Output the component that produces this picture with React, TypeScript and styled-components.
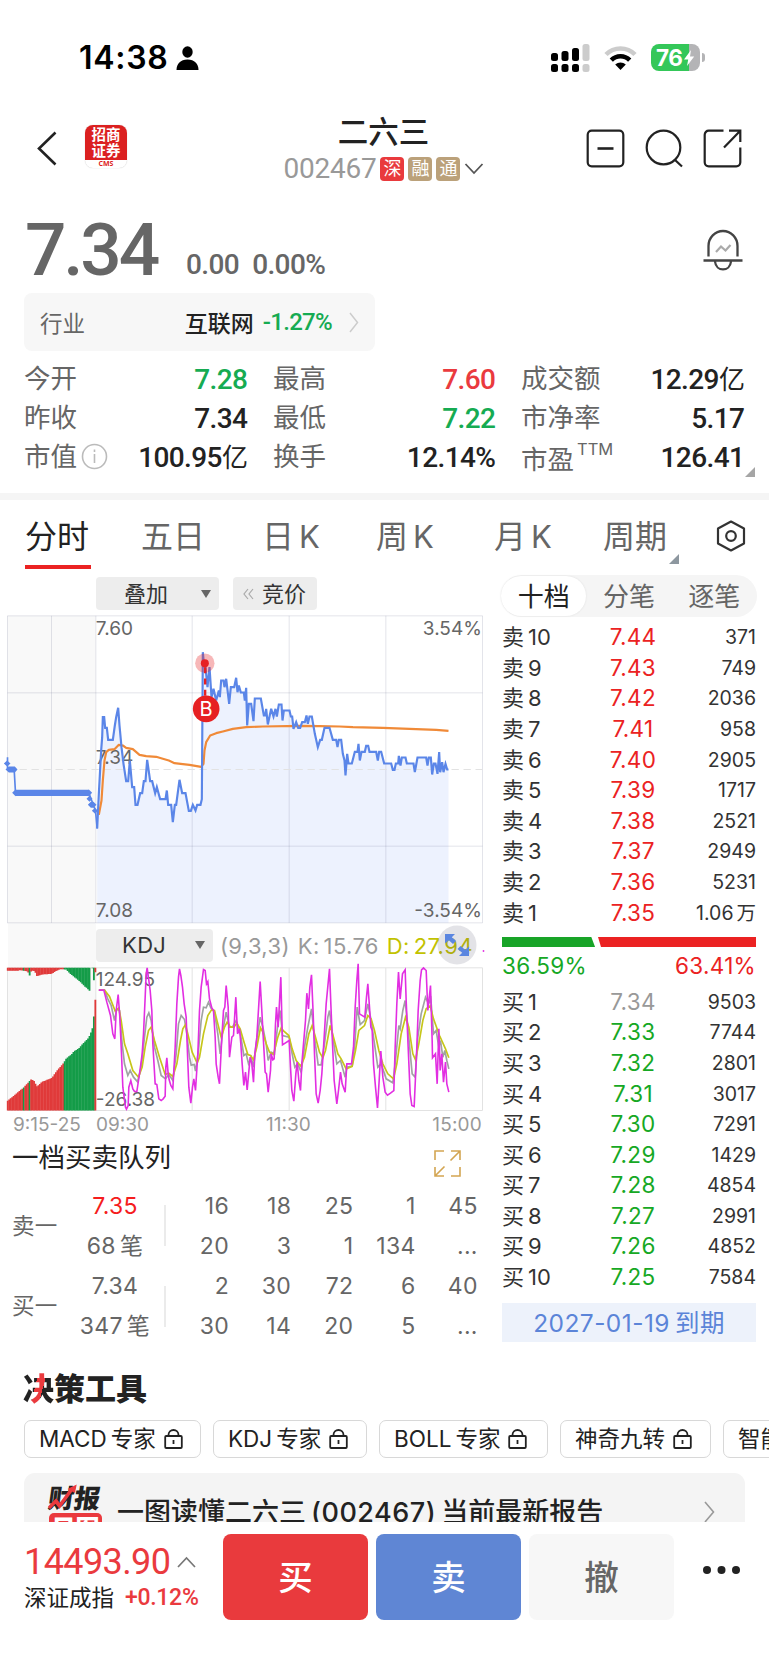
import React from "react";
import styled, { createGlobalStyle } from "styled-components";

const RED = "#eb2222";
const UP = "#ea3a3e";
const GREEN = "#16a824";
const SANS = `Inter, "Noto Sans CJK SC", sans-serif`;
const DIN = `Roboto, "Noto Sans CJK SC", sans-serif`;

const Global = createGlobalStyle`
  * { box-sizing: border-box; }
  body { margin: 0; background: #fff; }
`;

const Screen = styled.main`
  width: 769px;
  height: 1665px;
  overflow: hidden;
  display: flex;
  flex-direction: column;
  background: #fff;
  color: #222;
  font-family: ${SANS};
  white-space: nowrap;
`;

/* ---------- status bar ---------- */
const StatusBar = styled.div`
  height: 115px;
  flex: none;
  display: flex;
  align-items: center;
  padding: 0 69px 0 79px;
`;
const Clock = styled.span`
  font-size: 32px;
  font-weight: 600;
  color: #000;
  width: 97px;
  letter-spacing: 0.7px;
`;
const StatusIcons = styled.div`
  margin-left: auto;
  display: flex;
  align-items: center;
  gap: 14px;
`;
const Battery = styled.div`
  position: relative;
  width: 49px;
  height: 27px;
  border-radius: 8px;
  background: linear-gradient(90deg, #34c759 77%, #b4b4b6 77%);
  color: #fff;
  display: flex;
  align-items: center;
  padding-left: 5px;
  font-size: 22.5px;
  font-weight: 700;
  letter-spacing: -0.4px;
  line-height: 27px;
  &::after {
    content: "";
    position: absolute;
    right: -5px;
    top: 9px;
    width: 3px;
    height: 9px;
    border-radius: 0 3px 3px 0;
    background: #b4b4b6;
  }
`;

/* ---------- header ---------- */
const Header = styled.header`
  height: 84px;
  flex: none;
  display: grid;
  grid-template-columns: 249px 1fr 260px;
  padding: 0 27px 0 36px;
`;
const HeaderLeft = styled.div`
  display: flex;
  align-items: flex-start;
  gap: 27px;
  padding-top: 10px;
`;
const BrokerLogo = styled.div`
  width: 42px;
  height: 43px;
  border-radius: 8px;
  overflow: hidden;
  background: #fff;
  box-shadow: 0 0 1px #bbb;
  color: #fff;
  text-align: center;
  font: 700 14.5px/16px "Noto Sans CJK SC", sans-serif;
`;
const LogoTop = styled.div`
  height: 35px;
  padding-top: 1px;
  background: #db2020;
`;
const LogoFoot = styled.div`
  height: 8px;
  color: #d22;
  font: 700 7px/7px "Open Sans", sans-serif;
`;
const HeaderTitle = styled.div`
  display: flex;
  flex-direction: column;
  align-items: center;
  margin: 0 -20px;
`;
const StockName = styled.h1`
  margin: 0;
  font-size: 30.5px;
  font-weight: 500;
  line-height: 34px;
  height: 38px;
`;
const CodeLine = styled.div`
  display: flex;
  align-items: center;
  gap: 4px;
  height: 31px;
`;
const Code = styled.span`
  font: 400 28px/30px ${DIN};
  color: #999;
  letter-spacing: -0.25px;
  margin-left: 1px;
`;
const Badge = styled.span<{ $bg: string }>`
  width: 24px;
  height: 24px;
  border-radius: 4px;
  background: ${(p) => p.$bg};
  color: #fff;
  font-size: 18px;
  line-height: 23px;
  text-align: center;
`;
const HeaderActions = styled.div`
  display: flex;
  justify-content: flex-end;
  gap: 20px;
  padding-top: 14px;
`;

/* ---------- quote ---------- */
const PriceRow = styled.section`
  height: 94px;
  flex: none;
  display: flex;
  align-items: flex-end;
  padding: 0 26px 0 25px;
  color: #666;
`;
const Price = styled.div`
  font: 500 73px/73px ${DIN};
  letter-spacing: -3.2px;
  width: 161px;
  height: 80px;
  padding-top: 1px;
`;
const Change = styled.div`
  font: 500 28px/30px ${DIN};
  letter-spacing: -0.6px;
  height: 43px;
  display: flex;
  gap: 13px;
`;
const BellBox = styled.div`
  margin-left: auto;
  height: 64px;
`;
const Industry = styled.div`
  width: 351px;
  height: 58px;
  flex: none;
  margin-left: 24px;
  padding: 0 16px;
  border-radius: 8px;
  background: #f7f7f7;
  display: flex;
  align-items: center;
  font-size: 22.5px;
  color: #666;
`;
const IndustryName = styled.span`
  margin-left: auto;
  color: #222;
  font-weight: 500;
  font-size: 23px;
`;
const IndustryPct = styled.span`
  font: 500 24px/30px ${DIN};
  letter-spacing: -0.7px;
  color: #16ab52;
  margin: 0 17px 0 9px;
`;
const Stats = styled.section`
  height: 142px;
  flex: none;
  position: relative;
  display: grid;
  grid-template-columns: 223px 222px 223px;
  grid-auto-rows: 39.2px;
  column-gap: 26px;
  padding: 9px 25px 0 24px;
`;
const Stat = styled.div`
  display: flex;
  align-items: center;
  justify-content: space-between;
`;
const StatLabel = styled.span<{ $drop?: boolean }>`
  display: flex;
  align-items: center;
  gap: 4px;
  font-size: 26.5px;
  line-height: 36px;
  padding-bottom: ${(p) => (p.$drop ? 0 : 3)}px;
  padding-top: ${(p) => (p.$drop ? 3 : 0)}px;
  color: #666;
`;
const Sup = styled.sup`
  font-size: 16.5px;
  line-height: 17px;
  margin: 0 0 20px -1px;
  vertical-align: baseline;
`;
const StatValue = styled.span<{ $color?: string }>`
  font: 500 28px/38px ${DIN};
  letter-spacing: -0.6px;
  margin-right: -0.3px;
  color: ${(p) => p.$color || "#222"};
`;
const Yi = styled.span`
  font-size: 26px;
  font-weight: 400;
`;
const Corner = styled.i<{ $right: number; $bottom: number; $color: string }>`
  position: absolute;
  right: ${(p) => p.$right}px;
  bottom: ${(p) => p.$bottom}px;
  border-style: solid;
  border-width: 0 0 10px 10px;
  border-color: transparent transparent ${(p) => p.$color} transparent;
`;
const Divider = styled.div`
  height: 7px;
  flex: none;
  background: #f5f5f5;
`;

/* ---------- period tabs ---------- */
const Tabs = styled.nav`
  height: 75px;
  flex: none;
  display: flex;
  padding: 0 23px 0 25px;
  font-size: 32px;
`;
const Tab = styled.div<{ $w: number; $active?: boolean }>`
  width: ${(p) => p.$w}px;
  line-height: 74px;
  height: 75px;
  color: ${(p) => (p.$active ? "#222" : "#666")};
  display: flex;
  gap: 5px;
  position: relative;
  &::after {
    content: "";
    display: ${(p) => (p.$active ? "block" : "none")};
    position: absolute;
    left: 0;
    top: 65px;
    width: 66px;
    height: 4px;
    background: ${RED};
  }
`;
const Latin = styled.span`
  font-size: 31px;
`;
const GearBox = styled.div`
  margin-left: auto;
  padding-top: 20px;
`;

/* ---------- body ---------- */
const Body = styled.div`
  height: 779px;
  flex: none;
  display: grid;
  grid-template-columns: 483px 256px;
  column-gap: 18px;
`;
const Left = styled.div`
  display: flex;
  flex-direction: column;
`;
const Toolbar = styled.div`
  height: 39.5px;
  flex: none;
  padding: 2px 0 0 96px;
  display: flex;
  gap: 14px;
`;
const Tool = styled.div<{ $w: number; $px: string }>`
  width: ${(p) => p.$w}px;
  height: 33px;
  padding: ${(p) => p.$px};
  border-radius: 4px;
  background: #ededed;
  display: flex;
  align-items: center;
  justify-content: space-between;
  font-size: 22px;
  line-height: 33px;
  color: #333;
`;
const Caret = styled.i`
  border-style: solid;
  border-width: 8px 5.5px 0;
  border-color: #666 transparent transparent;
`;
const ChartPad = styled.div`
  padding-left: 7.2px;
`;
const Chart = styled.svg`
  display: block;
  flex: none;
  overflow: visible;
`;
const IndicatorRow = styled.div`
  height: 43.5px;
  flex: none;
  position: relative;
  margin-left: 8px;
  padding: 5px 0 0 88px;
  display: flex;
  font-size: 22px;
  line-height: 34px;
  letter-spacing: 0.35px;
  background: linear-gradient(90deg, #f9f9f9 88px, transparent 88px);
`;
const Reading = styled.span<{ $color: string; $ml: number }>`
  color: ${(p) => p.$color};
  margin-left: ${(p) => p.$ml}px;
  display: flex;
  gap: 4px;
`;
const Expand = styled.svg`
  position: absolute;
  left: 429px;
  top: 1px;
`;
const TimeAxis = styled.div`
  height: 29px;
  flex: none;
  display: grid;
  grid-template-columns: 83px 158px 122px 106px;
  padding-left: 13px;
  font-size: 19px;
  line-height: 28px;
  color: #999;
`;
const Midday = styled.span`
  padding-left: 12px;
`;
const End = styled.span`
  text-align: right;
  letter-spacing: 0.2px;
`;
const QueueHead = styled.div`
  height: 45.5px;
  flex: none;
  padding: 0 22px 0 12px;
  display: flex;
  justify-content: space-between;
  align-items: flex-start;
  font-size: 26.5px;
  line-height: 34px;
`;
const ExpandGold = styled.svg`
  margin-top: 10px;
`;
const Queue = styled.div`
  height: 80.7px;
  flex: none;
  display: grid;
  grid-template-columns: 63px 80px 11px 63px 62.2px 62.2px 62.2px 62.2px;
  grid-template-rows: 40.3px 40.3px;
  padding-left: 12px;
  color: #666;
  font-size: 23px;
  line-height: 40px;
  letter-spacing: 0.3px;
`;
const Side = styled.div`
  grid-row: 1 / 3;
  align-self: center;
  font-size: 22.5px;
`;
const QueuePrice = styled.div<{ $color?: string }>`
  text-align: center;
  color: ${(p) => p.$color || "#666"};
`;
const Count = styled.div`
  display: flex;
  justify-content: center;
  gap: 4px;
`;
const Bar = styled.div`
  grid-row: 1 / 3;
  grid-column: 3;
  justify-self: end;
  align-self: center;
  width: 2px;
  height: 41px;
  background: #ebebeb;
`;
const Cell = styled.div`
  text-align: right;
`;

/* ---------- order book ---------- */
const Right = styled.div`
  display: flex;
  flex-direction: column;
`;
const BookTabs = styled.div`
  height: 42px;
  flex: none;
  border-radius: 21px;
  background: #f5f5f5;
  display: flex;
  font-size: 26px;
  line-height: 42px;
  text-align: center;
`;
const BookTab = styled.div<{ $active?: boolean }>`
  flex: 1;
  height: 40px;
  margin-top: 1px;
  border-radius: 20px;
  background: ${(p) => (p.$active ? "#fff" : "transparent")};
  color: ${(p) => (p.$active ? "#222" : "#666")};
  box-shadow: ${(p) => (p.$active ? "0 0 2px #ddd" : "none")};
`;
const Book = styled.div<{ $top: number }>`
  margin-top: ${(p) => p.$top}px;
  display: flex;
  flex-direction: column;
`;
const Level = styled.div`
  height: 30.6px;
  display: grid;
  grid-template-columns: 86px 90px 78px;
  align-items: center;
  padding-left: 1px;
  font-size: 22px;
  line-height: 30px;
  color: #333;
`;
const LevelName = styled.span`
  display: flex;
  gap: 4px;
`;
const LevelPrice = styled.span<{ $color: string }>`
  color: ${(p) => p.$color};
  font-size: 22.5px;
  text-align: center;
  letter-spacing: 0.3px;
`;
const Volume = styled.span`
  font-size: 19.5px;
  display: flex;
  justify-content: flex-end;
  gap: 3px;
`;
const Ratio = styled.div`
  height: 10px;
  margin: 9px 1px 0;
  flex: none;
  display: flex;
`;
const RatioBuy = styled.div`
  width: 94px;
  background: #18a428;
  clip-path: polygon(0 0, 95% 0, 99% 100%, 0 100%);
`;
const RatioSell = styled.div`
  flex: 1;
  background: ${RED};
  clip-path: polygon(2px 0, 100% 0, 100% 100%, 5px 100%);
`;
const RatioText = styled.div`
  display: flex;
  justify-content: space-between;
  padding: 0 1px 0 1px;
  line-height: 37px;
  height: 36px;
`;
const Expiry = styled.div`
  height: 39px;
  margin: 11px 1px 0;
  background: #edf2fb;
  color: #5b84d8;
  font-size: 24.5px;
  letter-spacing: 0.45px;
  line-height: 40px;
  display: flex;
  gap: 5px;
  justify-content: center;
`;

/* ---------- tools ---------- */
const ToolsTitle = styled.h2`
  flex: none;
  margin: 0 0 0 23px;
  font: 900 31px/44px "Noto Sans CJK SC", sans-serif;
  padding-top: 11px;
  height: 65.5px;
`;
const TitleAccent = styled.span`
  background: linear-gradient(105deg, #222 42%, ${UP} 42%, ${UP} 61%, #222 61%);
  background-clip: text;
  color: transparent;
`;
const Chips = styled.div`
  display: flex;
  flex: none;
  gap: 12px;
  padding-left: 24px;
`;
const Chip = styled.div<{ $w: number }>`
  width: ${(p) => p.$w}px;
  height: 38px;
  flex: none;
  border: 1.5px solid #d8d8d8;
  border-radius: 7px;
  padding-left: 14px;
  display: flex;
  align-items: center;
  gap: 4px;
  font-size: 22.5px;
  line-height: 34px;
`;
const Lock = styled.svg`
  margin-left: 4px;
`;
const ReportClip = styled.div`
  height: 64.5px;
  flex: none;
  overflow: hidden;
  padding: 15.5px 24px 0;
`;
const Report = styled.div`
  height: 90px;
  border-radius: 11px;
  background: #f4f4f4;
  padding: 0 29px 0 25px;
  display: flex;
`;
const ReportLogo = styled.div`
  width: 68px;
  font: 900 26px/28px "Noto Sans CJK SC", sans-serif;
`;
const LogoWord = styled.div`
  width: 53px;
  transform: skewX(-8deg);
  padding-top: 10px;
  height: 40px;
  position: relative;
`;
const LogoArrow = styled.svg`
  position: absolute;
  left: 1px;
  top: 11px;
`;
const LogoBox = styled.div`
  width: 53px;
  height: 36px;
  border-radius: 5px;
  background: ${UP};
  color: #fff;
  font-size: 24px;
  line-height: 27px;
  text-align: center;
`;
const ReportText = styled.div`
  display: flex;
  gap: 5px;
  font-size: 27px;
  font-weight: 500;
  line-height: 38px;
  padding-top: 21px;
`;
const ReportCode = styled.span`
  letter-spacing: 0.5px;
`;
const ReportArrow = styled.svg`
  margin: 28px 1px 0 auto;
`;

/* ---------- bottom ---------- */
const Bottom = styled.footer`
  flex: none;
  height: 144px;
  background: #fff;
  padding: 12px 0 0 24px;
  display: flex;
  gap: 8px;
`;
const Index = styled.div`
  width: 191px;
`;
const IndexValue = styled.div`
  display: flex;
  align-items: center;
  gap: 7px;
  color: ${UP};
  font: 400 36px/40px ${DIN};
  letter-spacing: -0.6px;
  padding-top: 8px;
`;
const IndexLine = styled.div`
  display: flex;
  gap: 11px;
  font-size: 22.5px;
  line-height: 32px;
`;
const IndexPct = styled.span`
  font: 500 23px/32px ${DIN};
  letter-spacing: -0.3px;
  color: ${UP};
`;
const Action = styled.button<{ $bg: string; $color: string }>`
  width: 145px;
  height: 86px;
  border: 0;
  padding: 0;
  border-radius: 8px;
  background: ${(p) => p.$bg};
  color: ${(p) => p.$color};
  font: 500 34.5px/88px ${SANS};
`;
const More = styled.svg`
  margin: 31px 0 0 20px;
`;

/* ---------- data ---------- */
const priceLine =
  "293,684 298,580 305,450 308,410 310,350 314,350 317,382 322,382 326,418 340,418 346,375 350,350 356,322 360,375 366,440 372,490 380,542 386,542 391,480 398,560 404,560 408,613 414,613 422,578 428,578 433,542 438,542 443,478 452,542 458,542 467,578 472,560 482,596 498,596 502,570 506,613 515,613 520,665 526,613 530,613 540,538 548,578 558,578 568,631 574,631 580,613 588,630 593,613 603,613 607,596 610,155 614,200 617,190 624,260 630,200 636,290 642,265 650,300 658,270 661,290 665,240 672,240 675,260 680,235 689,310 694,260 704,260 710,232 714,275 718,255 724,276 733,276 736,300 740,262 743,375 748,310 755,310 762,362 766,294 784,294 793,345 797,345 800,325 805,372 815,325 822,348 828,325 832,348 838,312 846,312 849,360 853,330 870,330 874,348 878,348 882,385 890,365 896,382 902,382 908,365 916,365 921,345 925,370 930,348 937,348 946,400 955,440 962,418 967,418 975,382 990,382 1000,418 1010,418 1014,440 1018,418 1025,418 1030,460 1035,480 1038,525 1043,460 1047,489 1057,489 1066,454 1074,454 1077,430 1081,480 1086,454 1096,454 1100,436 1106,436 1110,454 1130,454 1135,480 1139,454 1145,454 1154,489 1175,489 1180,508 1185,508 1189,489 1196,489 1198,466 1203,495 1207,471 1218,471 1222,489 1242,489 1246,515 1254,471 1280,471 1284,495 1288,471 1294,471 1298,522 1303,489 1308,489 1314,520 1319,455 1322,515 1328,485 1332,515 1338,490 1343,507 1347,507";
const averageLine =
  "298,643 306,600 310,540 315,480 320,455 328,448 345,446 358,433 370,435 380,442 400,446 420,463 440,467 470,469 490,475 508,480 525,488 550,491 570,493 605,499 612,490 615,450 620,425 632,405 650,398 670,393 700,385 740,380 790,378 900,376 960,377 1020,378 1060,380 1150,382 1250,386 1310,388 1347,391";
const jLine =
  "298,209 313,209 322,245 333,285 340,340 346,355 350,270 356,222 361,290 366,400 370,500 378,560 381,566 386,555 388,500 394,480 400,505 405,513 412,513 420,460 428,400 432,340 437,230 440,160 443,142 448,180 452,210 457,270 460,370 467,490 472,492 478,535 485,540 491,535 497,527 499,440 502,412 506,460 509,478 514,495 520,505 527,380 532,250 537,170 540,145 544,165 549,200 554,250 560,290 564,400 568,500 574,548 579,500 583,475 588,510 595,400 600,270 605,200 612,147 617,150 621,190 625,183 630,235 637,262 642,270 647,350 650,430 656,470 660,490 667,350 672,270 676,260 680,195 686,260 690,410 697,350 702,345 709,230 714,340 720,325 724,370 728,430 733,495 738,455 743,508 752,410 757,430 762,485 766,400 772,350 778,250 782,183 788,290 794,400 797,455 801,460 806,515 813,450 815,400 820,418 824,415 828,310 831,260 836,320 844,170 849,373 869,360 873,440 877,510 883,542 889,460 893,425 898,480 903,510 907,430 912,370 918,300 922,218 927,265 931,200 936,163 941,280 945,400 950,520 956,548 962,510 967,460 974,350 980,250 990,145 994,250 999,370 1004,480 1012,550 1017,510 1023,455 1028,490 1037,515 1042,430 1056,430 1062,380 1067,260 1072,180 1076,130 1080,280 1096,290 1101,230 1105,190 1110,260 1114,320 1118,330 1122,430 1128,500 1134,562 1139,480 1144,392 1150,470 1157,515 1164,524 1173,518 1183,510 1187,380 1192,250 1197,155 1202,235 1209,160 1217,148 1220,240 1226,380 1232,520 1237,555 1244,558 1248,470 1252,380 1256,270 1262,180 1266,148 1272,142 1280,150 1285,270 1293,195 1298,360 1299,412 1308,400 1313,490 1318,325 1322,450 1327,400 1332,485 1338,425 1342,490 1348,515";
const kLine =
  "298,209 315,209 325,235 335,255 345,300 352,265 360,270 368,370 375,430 385,465 392,450 402,470 414,484 425,440 435,350 442,290 448,277 455,300 465,380 475,420 485,465 498,475 508,462 520,480 530,400 537,310 545,285 555,297 562,340 570,410 575,434 584,432 588,452 597,390 605,300 612,260 620,262 627,245 634,262 645,275 655,340 662,400 670,330 680,275 690,320 700,318 710,300 722,335 733,405 740,400 747,430 755,410 762,440 770,370 782,290 790,320 800,370 806,420 815,395 825,400 835,310 842,270 849,345 869,350 878,400 886,440 895,430 905,455 915,380 925,320 936,265 945,350 956,433 965,433 975,370 985,290 990,270 1000,350 1012,430 1023,420 1037,470 1042,440 1058,437 1066,370 1073,260 1082,312 1095,300 1105,250 1115,300 1125,370 1135,440 1145,430 1160,475 1180,487 1188,420 1198,315 1202,325 1210,270 1217,240 1225,320 1238,460 1247,470 1255,350 1265,280 1278,230 1287,250 1294,235 1302,340 1310,330 1318,380 1323,360 1330,410 1336,390 1342,420 1348,445";
const dLine =
  "298,209 315,209 330,228 347,272 358,262 365,300 375,370 385,400 400,450 417,470 428,440 437,380 447,330 455,320 465,360 480,410 497,462 508,458 520,468 532,430 543,360 550,325 558,312 565,340 578,395 593,428 600,410 612,340 625,285 636,268 645,270 655,310 665,350 675,320 683,305 693,320 703,320 712,308 722,325 735,370 745,402 753,405 762,418 772,380 783,322 790,335 800,370 810,395 822,402 835,350 845,322 853,332 868,345 878,385 890,420 904,437 915,410 928,340 938,315 948,350 960,395 970,412 978,390 992,315 1002,350 1015,400 1025,415 1040,445 1058,438 1068,390 1078,330 1095,315 1105,285 1115,295 1125,330 1138,390 1150,430 1165,460 1182,475 1192,430 1205,340 1218,290 1228,320 1240,400 1248,418 1258,370 1270,300 1280,265 1292,256 1302,295 1320,345 1338,385 1348,412";

type Pt = [number, number];
const lowerProfile: Pt[] = [[22, 541], [35, 530], [48, 519], [70, 501], [84, 486], [92, 477], [100, 480], [110, 498], [125, 484], [155, 472], [170, 450], [188, 430], [197, 415], [215, 400], [220, 393], [235, 384], [250, 367], [265, 352], [272, 335], [278, 318], [282, 268], [286, 225]];
const upperProfile: Pt[] = [[22, 9], [50, 9], [60, 7], [82, 11], [88, 24], [93, 8], [103, 10], [110, 25], [125, 20], [155, 18], [165, 10], [180, 4], [197, 5], [210, 18], [225, 30], [240, 42], [255, 58], [262, 62], [267, 74], [271, 0], [276, 0], [278, 44], [283, 30], [286, 2]];
const at = (p: Pt[], x: number) => {
  const i = p.findIndex((q) => q[0] >= x);
  if (i <= 0) return p[i === 0 ? 0 : p.length - 1][1];
  const [a, b] = [p[i - 1], p[i]];
  return a[1] + ((b[1] - a[1]) * (x - a[0])) / (b[0] - a[0]);
};
const auctionBars = Array.from({ length: 61 }, (_, i) => {
  const x = 22 + i * 4.38;
  const green = (x > 189 && x < 284 && !(x > 272 && x < 275)) || (x > 68 && x < 72) || (x > 84 && x < 92);
  return { x, green, low: at(lowerProfile, x), up: at(upperProfile, x) };
});

const sells = [["10", "7.44", "371"], ["9", "7.43", "749"], ["8", "7.42", "2036"], ["7", "7.41", "958"], ["6", "7.40", "2905"], ["5", "7.39", "1717"], ["4", "7.38", "2521"], ["3", "7.37", "2949"], ["2", "7.36", "5231"], ["1", "7.35", "1.06"]];
const buys = [["1", "7.34", "9503"], ["2", "7.33", "7744"], ["3", "7.32", "2801"], ["4", "7.31", "3017"], ["5", "7.30", "7291"], ["6", "7.29", "1429"], ["7", "7.28", "4854"], ["8", "7.27", "2991"], ["9", "7.26", "4852"], ["10", "7.25", "7584"]];
const chips: [number, string, string][] = [[177, "MACD", "专家"], [154, "KDJ", "专家"], [169, "BOLL", "专家"], [151, "", "神奇九转"], [170, "", "智能盯盘"]];

const grid = { stroke: "#e2e2e2", strokeWidth: 3, fill: "none" };
const chartText = { fontFamily: "Inter", fontSize: 57, fill: "#666" };

const PriceChart = () => (
  <Chart width={476} height={309} viewBox="22.5 43.5 1428 927">
    <rect x="24" y="46" width="264" height="924" fill="#f9f9f9" />
    <polygon points={`293,967 ${priceLine} 1347,967`} fill="#edf2fe" />
    <path d="M24 46H1449V967H24ZM156 46V967M289 46V967M578 46V967M869 46V967M1159 46V967M24 277H1449M24 737H1449" fill="none" strokeWidth="3" stroke="#5a6080" strokeOpacity="0.17" />
    <path d="M24 507H1449" stroke="#e2e2e2" strokeWidth="3" strokeDasharray="22 14" />
    <text x="289" y="102" {...chartText}>7.60</text>
    <text x="289" y="489" {...chartText}>7.34</text>
    <text x="289" y="948" {...chartText}>7.08</text>
    <text x="1447" y="102" textAnchor="end" {...chartText}>3.54%</text>
    <text x="1447" y="948" textAnchor="end" {...chartText}>-3.54%</text>
    <path d="M24 470V507M44 507L48 577M268 577L288 631L293 684" stroke="#5b86e8" strokeWidth="5" fill="none" />
    <path d="M48 577H268" stroke="#5b86e8" strokeWidth="19" />
    <path d="M23 480l10 9l-10 9l-10-9zM18 507l10-9h18l8 9l-8 9h-18zM38 577l10-10l10 10l-10 10zM258 577l10-10l10 10l-10 10zM261 595l9-9l9 9l-9 9zM265 613l9-9h8l9 9l-9 9h-8zM277 631l10-9l8 9l-8 9z" fill="#5b86e8" />
    <polyline points={averageLine} fill="none" stroke="#f08a38" strokeWidth="6.5" strokeLinejoin="round" />
    <polyline points={priceLine} fill="none" stroke="#5b86e8" strokeWidth="6.5" />
    <circle cx="616" cy="188" r="29" fill="#e62022" fillOpacity="0.32" />
    <circle cx="616" cy="188" r="12" fill="#e62022" />
    <path d="M617 196V290" stroke="#e62022" strokeWidth="7" strokeDasharray="18 16" strokeDashoffset="-4" />
    <circle cx="620" cy="325" r="40" fill="#e62022" />
    <text x="620" y="346" textAnchor="middle" fontFamily="Inter" fontSize="60" fill="#fff">B</text>
  </Chart>
);

const KdjChart = () => (
  <Chart width={476} height={144} viewBox="22.5 139.5 1428 432">
    <rect x="24" y="139" width="264" height="431" fill="#f9f9f9" />
    <path d="M24 142H1449V570H24ZM156 142V570M289 142V570M578 142V570M869 142V570M1159 142V570" {...grid} />
    {auctionBars.map((b) => (
      <path key={b.x} d={`M${b.x} 142h5.500v${b.up}h-5.500zM${b.x} ${b.low}h5.500V570h-5.500z`} fill={b.green ? "#149c48" : "#e03a3a"} />
    ))}
    <text x="289" y="196" {...chartText}>124.95</text>
    <text x="289" y="557" {...chartText}>-26.38</text>
    <polyline points={kLine} fill="none" stroke="#a0a3a3" strokeWidth="5" />
    <polyline points={dLine} fill="none" stroke="#c6c61a" strokeWidth="5" />
    <polyline points={jLine} fill="none" stroke="#e22ee2" strokeWidth="4.8" />
  </Chart>
);

const LevelRow = ({ side, row, color, unit }: { side: string; row: string[]; color: string; unit?: string }) => (
  <Level>
    <LevelName><span>{side}</span><span>{row[0]}</span></LevelName>
    <LevelPrice $color={color}>{row[1]}</LevelPrice>
    <Volume><span>{row[2]}</span>{unit && <span>{unit}</span>}</Volume>
  </Level>
);

const QueueBlock = ({ name, price, color, count, top, bottom }: { name: string; price: string; color?: string; count: string; top: string[]; bottom: string[] }) => (
  <Queue>
    <Side>{name}</Side>
    <QueuePrice $color={color}>{price}</QueuePrice>
    <Bar />
    {top.map((v, i) => <Cell key={i}>{v}</Cell>)}
    <Count><span>{count}</span><span>笔</span></Count>
    {bottom.map((v, i) => <Cell key={i}>{v}</Cell>)}
  </Queue>
);

export default function App() {
  return (
    <Screen>
      <Global />
      <StatusBar>
        <Clock>14:38</Clock>
        <svg width="23" height="24" viewBox="0 0 23 24"><ellipse cx="11.5" cy="6" rx="5.2" ry="5.8" /><path d="M.5 24c0-6 4-10.500 11-10.500s11 4.500 11 10.500z" /></svg>
        <StatusIcons>
          <svg width="39" height="28" viewBox="0 0 39 28">
            <g fill="#000"><rect x="0" y="9" width="7" height="8" rx="2.500" /><rect x="10.500" y="7" width="7" height="10" rx="2.500" /><rect x="21" y="4" width="7" height="13" rx="2.500" /><rect x="0" y="20" width="7" height="8" rx="2.500" /><rect x="10.500" y="20" width="7" height="8" rx="2.500" /><rect x="21" y="20" width="7" height="8" rx="2.500" /></g>
            <g fill="#ccc"><rect x="31.500" y="0" width="7" height="17" rx="2.500" /><rect x="31.500" y="20" width="7" height="8" rx="2.500" /></g>
          </svg>
          <svg width="33" height="24" viewBox="0 0 33 24" fill="none" strokeWidth="4.600">
            <path d="M2 8.500C10 .4 23 .4 31 8.500" stroke="#ccc" />
            <path d="M7.300 14.200C12.500 9 20.500 9 25.700 14.200" stroke="#000" />
            <path d="M11.200 18.600C14.200 15.800 18.800 15.800 21.800 18.600L16.500 24Z" fill="#000" />
          </svg>
          <Battery>76<svg width="12" height="18" viewBox="0 0 12 18"><path d="M8 1L1 10.500h4.200L4 17l7.200-9.500H7z" fill="#fff" /></svg></Battery>
        </StatusIcons>
      </StatusBar>

      <Header>
        <HeaderLeft>
          <svg width="22" height="46" viewBox="0 0 22 46"><path d="M19.500 7.500L3 23.500l16.500 16" fill="none" stroke="#222" strokeWidth="2.600" /></svg>
          <BrokerLogo><LogoTop>招商<br />证券</LogoTop><LogoFoot>CMS</LogoFoot></BrokerLogo>
        </HeaderLeft>
        <HeaderTitle>
          <StockName>二六三</StockName>
          <CodeLine>
            <Code>002467</Code>
            <Badge $bg="#e93a3d">深</Badge><Badge $bg="#bba17a">融</Badge><Badge $bg="#bba17a">通</Badge>
            <svg width="20" height="12" viewBox="0 0 20 12"><path d="M1.500 1l8.500 9 8.500-9" fill="none" stroke="#555" strokeWidth="1.800" /></svg>
          </CodeLine>
        </HeaderTitle>
        <HeaderActions>
          <svg width="39" height="39" viewBox="0 0 39 39" fill="none" stroke="#222" strokeWidth="2.200"><rect x="1.700" y="1.700" width="35.600" height="35.600" rx="4" /><path d="M11.500 19.500h16" strokeWidth="2.600" /></svg>
          <svg width="38" height="39" viewBox="0 0 38 39" fill="none" stroke="#222" strokeWidth="2.200"><circle cx="18.500" cy="18.500" r="16.800" /><path d="M29.500 30.500l7.500 7" /></svg>
          <svg width="39" height="39" viewBox="0 0 39 39" fill="none" stroke="#222" strokeWidth="2.200"><path d="M20.500 1.700H5.700a4 4 0 0 0-4 4v27.600a4 4 0 0 0 4 4h27.600a4 4 0 0 0 4-4V18.500M21 18.500L37 2M26 1.700h11.300V13" /></svg>
        </HeaderActions>
      </Header>

      <PriceRow>
        <Price>7.34</Price>
        <Change><span>0.00</span><span>0.00%</span></Change>
        <BellBox>
          <svg width="40" height="42" viewBox="0 0 40 42" fill="none" stroke="#444" strokeWidth="2.300"><path d="M5.500 27.500V17a14.500 15 0 0 1 29 0V27.500M0.500 31.500h39M12 32.500c1 10.500 15 10.500 16 0" /><path d="M13 23l5-5.500 4.500 4 5-5.500" stroke="#aaa" strokeWidth="2.200" /></svg>
        </BellBox>
      </PriceRow>

      <Industry>
        行业<IndustryName>互联网</IndustryName><IndustryPct>-1.27%</IndustryPct>
        <svg width="10" height="21" viewBox="0 0 10 21"><path d="M1 1l7.500 9.500L1 20" fill="none" stroke="#ccc" strokeWidth="1.500" /></svg>
      </Industry>

      <Stats>
        <Stat><StatLabel>今开</StatLabel><StatValue $color="#16ab52">7.28</StatValue></Stat>
        <Stat><StatLabel>最高</StatLabel><StatValue $color={UP}>7.60</StatValue></Stat>
        <Stat><StatLabel>成交额</StatLabel><StatValue>12.29<Yi>亿</Yi></StatValue></Stat>
        <Stat><StatLabel>昨收</StatLabel><StatValue>7.34</StatValue></Stat>
        <Stat><StatLabel>最低</StatLabel><StatValue $color="#16ab52">7.22</StatValue></Stat>
        <Stat><StatLabel>市净率</StatLabel><StatValue>5.17</StatValue></Stat>
        <Stat>
          <StatLabel>市值<svg width="27" height="27" viewBox="0 0 27 27" fill="none" stroke="#bbb" strokeWidth="1.600"><circle cx="13.500" cy="13.500" r="12" /><path d="M13.500 11v9M13.500 6.500v2.500" /></svg></StatLabel>
          <StatValue>100.95<Yi>亿</Yi></StatValue>
        </Stat>
        <Stat><StatLabel>换手</StatLabel><StatValue>12.14%</StatValue></Stat>
        <Stat><StatLabel $drop>市盈<Sup>TTM</Sup></StatLabel><StatValue>126.41</StatValue></Stat>
        <Corner $right={14} $bottom={16} $color="#a5a5a5" />
      </Stats>
      <Divider />

      <Tabs>
        <Tab $w={116} $active>分时</Tab>
        <Tab $w={121}>五日</Tab>
        <Tab $w={114}><span>日</span><Latin>K</Latin></Tab>
        <Tab $w={118}><span>周</span><Latin>K</Latin></Tab>
        <Tab $w={109}><span>月</span><Latin>K</Latin></Tab>
        <Tab $w={77}>周期<Corner $right={1} $bottom={11} $color="#8d979f" /></Tab>
        <GearBox>
          <svg width="30" height="32" viewBox="0 0 30 32" fill="none" stroke="#333" strokeWidth="2.200"><path d="M15 1.500L28 8.500v15L15 30.500 2 23.500v-15z" strokeLinejoin="round" /><circle cx="15" cy="16" r="4.800" /></svg>
        </GearBox>
      </Tabs>

      <Body>
        <Left>
          <Toolbar>
            <Tool $w={123} $px="1px 8px 0 28px">叠加<Caret /></Tool>
            <Tool $w={84} $px="1px 11px 0 10px">
              <svg width="11" height="12" viewBox="0 0 11 12"><path d="M5 1L1 6l4 5M10 1L6 6l4 5" fill="none" stroke="#aaa" strokeWidth="1.200" /></svg>竞价
            </Tool>
          </Toolbar>
          <ChartPad><PriceChart /></ChartPad>
          <IndicatorRow>
            <Tool $w={117} $px="0 8px 0 26px">KDJ<Caret /></Tool>
            <Reading $color="#999" $ml={7}>(9,3,3)</Reading>
            <Reading $color="#999" $ml={8}><span>K:</span><span>15.76</span></Reading>
            <Reading $color="#c2c200" $ml={8}><span>D:</span><span>27.94</span></Reading>
            <Expand width="54" height="40" viewBox="0 0 54 40">
              <circle cx="20" cy="20" r="19.500" fill="#464660" fillOpacity="0.15" />
              <path d="M8 9h10l-3.200 3.200L19 16l-3 3-4.200-3.800L8 18.500zM32 31H22l3.200-3.200L20.500 24l3-3 4.700 3.800L32 21.500z" fill="#5b86e0" />
              <circle cx="46.500" cy="26" r="0.900" fill="#e22ee2" />
            </Expand>
          </IndicatorRow>
          <ChartPad><KdjChart /></ChartPad>
          <TimeAxis><span>9:15-25</span><span>09:30</span><Midday>11:30</Midday><End>15:00</End></TimeAxis>
          <QueueHead>
            一档买卖队列
            <ExpandGold width="27" height="27" viewBox="0 0 27 27" fill="none" stroke="#d3a552" strokeWidth="1.600"><path d="M1 10V1h9M17 1h9v9M26 17v9h-9M10 26H1v-9M26 1l-9.500 9.500M1 26l9.500-9.500" /></ExpandGold>
          </QueueHead>
          <QueueBlock name="卖一" price="7.35" color="#f51d1d" count="68" top={["16", "18", "25", "1", "45"]} bottom={["20", "3", "1", "134", "..."]} />
          <QueueBlock name="买一" price="7.34" count="347" top={["2", "30", "72", "6", "40"]} bottom={["30", "14", "20", "5", "..."]} />
        </Left>

        <Right>
          <BookTabs><BookTab $active>十档</BookTab><BookTab>分笔</BookTab><BookTab>逐笔</BookTab></BookTabs>
          <Book $top={5}>
            {sells.map((r) => <LevelRow key={r[0]} side="卖" row={r} color={RED} unit={r[0] === "1" ? "万" : undefined} />)}
          </Book>
          <Ratio><RatioBuy /><RatioSell /></Ratio>
          <RatioText><LevelPrice $color={GREEN}>36.59%</LevelPrice><LevelPrice $color={RED}>63.41%</LevelPrice></RatioText>
          <Book $top={3.5}>
            {buys.map((r) => <LevelRow key={r[0]} side="买" row={r} color={r[0] === "1" ? "#999" : GREEN} />)}
          </Book>
          <Expiry><span>2027-01-19</span><span>到期</span></Expiry>
        </Right>
      </Body>

      <ToolsTitle><TitleAccent>决</TitleAccent>策工具</ToolsTitle>
      <Chips>
        {chips.map(([w, en, zh]) => (
          <Chip key={en + zh} $w={w}>
            {en && <span>{en}</span>}<span>{zh}</span>
            <Lock width="19" height="20" viewBox="0 0 19 20" fill="none" stroke="#222" strokeWidth="1.800"><rect x="1.200" y="7" width="16.600" height="12" rx="1" /><path d="M4.500 7V6a5 5 0 0 1 10 0v1M9.500 11v4" /></Lock>
          </Chip>
        ))}
      </Chips>
      <ReportClip>
        <Report>
          <ReportLogo>
            <LogoWord>财报
              <LogoArrow width="30" height="26" viewBox="0 0 30 26"><path d="M1 24l6-7 4.500 5L22 4" fill="none" stroke="#ea3a3e" strokeWidth="3.600" /><path d="M17 5l8.500-4.500L25 9z" fill="#ea3a3e" /></LogoArrow>
            </LogoWord>
            <LogoBox>日图</LogoBox>
          </ReportLogo>
          <ReportText><span>一图读懂二六三</span><ReportCode>(002467)</ReportCode><span>当前最新报告</span></ReportText>
          <ReportArrow width="11" height="22" viewBox="0 0 11 22"><path d="M1 1l8.500 10L1 21" fill="none" stroke="#999" strokeWidth="1.600" /></ReportArrow>
        </Report>
      </ReportClip>

      <Bottom>
        <Index>
          <IndexValue>14493.90<svg width="19" height="12" viewBox="0 0 19 12"><path d="M1 11l8.500-9 8.500 9" fill="none" stroke="#777" strokeWidth="1.700" /></svg></IndexValue>
          <IndexLine>深证成指<IndexPct>+0.12%</IndexPct></IndexLine>
        </Index>
        <Action $bg="#e93a3d" $color="#fff">买</Action>
        <Action $bg="#5f86d4" $color="#fff">卖</Action>
        <Action $bg="#f7f7f7" $color="#666">撤</Action>
        <More width="38" height="10" viewBox="0 0 38 10" fill="#222"><circle cx="5" cy="5" r="4" /><circle cx="19.500" cy="5" r="4" /><circle cx="34" cy="5" r="4" /></More>
      </Bottom>
    </Screen>
  );
}
